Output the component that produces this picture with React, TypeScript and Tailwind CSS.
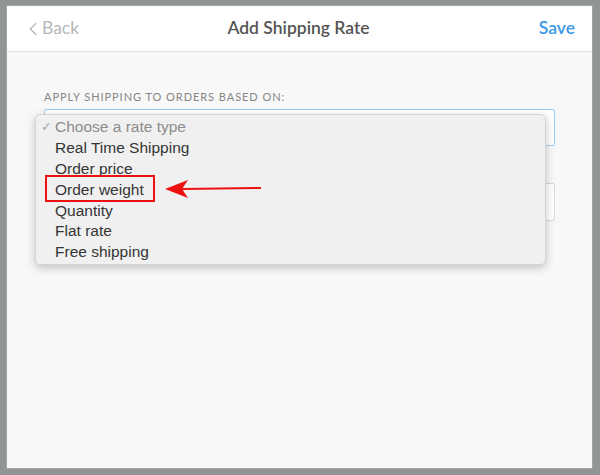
import { ChevronLeft } from "lucide-react"

const rateTypes = [
	"Real Time Shipping",
	"Order price",
	"Order weight",
	"Quantity",
	"Flat rate",
	"Free shipping",
]

function RateTypeMenu() {
	return (
		<div
			className="absolute left-[-9px] top-[5px] z-10 w-[511px] rounded-[5px] border border-[#d4d4d4] bg-[#f0f0f0] pb-[2px] pt-[2px] shadow-[0_3px_10px_rgba(0,0,0,0.22)]"
			style={{ fontFamily: '"Liberation Sans", Arial, sans-serif' }}
		>
			<div className="flex h-[21px] items-center pl-[5px] text-[15.5px] text-[#8c8c8c]">
				<span className="w-[14px] text-[13px] text-[#a8a8a8]">✓</span>
				Choose a rate type
			</div>
			{rateTypes.map((type) => (
				<div key={type} className="flex h-[20.8px] items-center pl-[19px] text-[15.5px] text-[#353535]">
					{type}
				</div>
			))}
		</div>
	)
}

export default function App() {
	return (
		<div
			className="h-[475px] w-[600px] overflow-hidden bg-[#929596] pl-[6px] pt-[5px]"
			style={{ fontFamily: 'Lato, "Open Sans", sans-serif' }}
		>
			<div className="relative flex h-[464px] w-[587px] flex-col border border-[#a3a5a6] bg-[#f8f8f8]">
				<div className="grid h-[46px] grid-cols-[1fr_auto_1fr] items-center border-b border-[#e4e4e4] bg-white pl-[15px] pr-[17px]">
					<div className="flex items-center text-[17.5px] text-[#b8b8b8]">
						<ChevronLeft className="h-[22px] w-[22px]" strokeWidth={1.5} />
						<span className="ml-[-2px]">Back</span>
					</div>
					<div className="text-[17.5px] font-semibold text-[#555555]">Add Shipping Rate</div>
					<div className="justify-self-end text-[17.5px] font-semibold text-[#3b98e6]">Save</div>
				</div>

				<div className="px-[37px] pt-[37px]">
					<div className="text-[11px] uppercase tracking-[0.95px] text-[#858585]">
						Apply shipping to orders based on:
					</div>
					<div className="relative mt-[3px]">
						<div className="h-[37px] w-[511px] rounded-[2px] border border-[#9dcaf3] bg-white" />
						<RateTypeMenu />
					</div>
					<div className="mt-[37px] h-[38px] w-[511px] rounded-[2px] border border-[#d9d9d9] bg-white" />
				</div>

				{/* annotation over the open menu */}
				<div className="absolute left-[38px] top-[169px] z-20 flex items-center">
					<div className="h-[27px] w-[110px] border-[2.5px] border-[#ee1111]" />
					<svg className="ml-[9px]" width="98" height="22" viewBox="0 0 98 22">
						<line x1="18" y1="11" x2="97" y2="10" stroke="#ee1111" strokeWidth="2" />
						<path d="M1 11 L24 2 L18 11 L24 20 Z" fill="#ee1111" />
					</svg>
				</div>
			</div>
		</div>
	)
}
